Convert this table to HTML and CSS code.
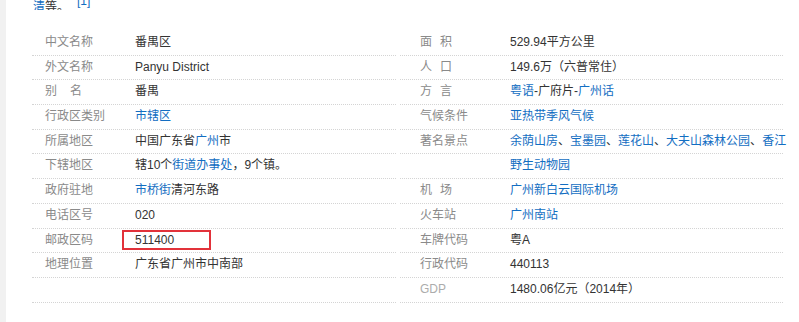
FILE: index.html
```html
<!DOCTYPE html>
<html lang="zh-CN">
<head>
<meta charset="utf-8">
<title>番禺区</title>
<link rel="stylesheet" href="styles.css">
</head>
<body>
<div class="page">
  <div class="intro"><p><a class="link">清</a>等。<sup class="ref"><a class="link">[1]</a></sup></p></div>
  <div class="info">
    <div class="col col-left">
      <div class="row"><span class="label">中文名称</span><span class="value">番禺区</span></div>
      <div class="row"><span class="label">外文名称</span><span class="value">Panyu District</span></div>
      <div class="row"><span class="label">别<i class="gap gap-wide"></i>名</span><span class="value">番禺</span></div>
      <div class="row"><span class="label">行政区类别</span><span class="value"><a class="link">市辖区</a></span></div>
      <div class="row"><span class="label">所属地区</span><span class="value">中国广东省<a class="link">广州</a>市</span></div>
      <div class="row"><span class="label">下辖地区</span><span class="value">辖10个<a class="link">街道办事处</a>，9个镇。</span></div>
      <div class="row"><span class="label">政府驻地</span><span class="value"><a class="link">市桥街</a>清河东路</span></div>
      <div class="row"><span class="label">电话区号</span><span class="value">020</span></div>
      <div class="row"><span class="label">邮政区码</span><span class="value value-marked">511400<span class="mark"></span></span></div>
      <div class="row"><span class="label">地理位置</span><span class="value">广东省广州市中南部</span></div>
      <div class="row"><span class="label"></span><span class="value"></span></div>
    </div>
    <div class="col col-right">
      <div class="row"><span class="label">面<i class="gap"></i>积</span><span class="value">529.94平方公里</span></div>
      <div class="row"><span class="label">人<i class="gap"></i>口</span><span class="value">149.6万（六普常住）</span></div>
      <div class="row"><span class="label">方<i class="gap"></i>言</span><span class="value"><a class="link">粤语</a>-广府片-<a class="link">广州话</a></span></div>
      <div class="row"><span class="label">气候条件</span><span class="value"><a class="link">亚热带季风气候</a></span></div>
      <div class="row"><span class="label">著名景点</span><span class="value"><a class="link">余荫山房</a>、<a class="link">宝墨园</a>、<a class="link">莲花山</a>、<a class="link">大夫山森林公园</a>、<a class="link">香江</a></span></div>
      <div class="row"><span class="label"></span><span class="value"><a class="link">野生动物园</a></span></div>
      <div class="row"><span class="label">机<i class="gap"></i>场</span><span class="value"><a class="link">广州新白云国际机场</a></span></div>
      <div class="row"><span class="label">火车站</span><span class="value"><a class="link">广州南站</a></span></div>
      <div class="row"><span class="label">车牌代码</span><span class="value">粤A</span></div>
      <div class="row"><span class="label">行政代码</span><span class="value">440113</span></div>
      <div class="row"><span class="label label-light">GDP</span><span class="value">1480.06亿元（2014年）</span></div>
    </div>
  </div>
</div>
</body>
</html>
```

FILE: styles.css
```css
* {
  box-sizing: border-box;
}

html, body {
  margin: 0;
  padding: 0;
  background: #ffffff;
}

body {
  font-family: "Liberation Sans", Arial, "Noto Sans CJK SC", sans-serif;
  font-size: 12px;
  color: #333333;
}

.page {
  min-height: 322px;
  border-left: 6px solid #f1f1f1;
  padding-left: 26px;
}

.intro {
  height: 10px;
  overflow: hidden;
  display: flex;
  align-items: flex-end;
  padding-left: 1px;
}

.intro p {
  margin: 0;
  line-height: 16px;
  margin-bottom: -5px;
  white-space: nowrap;
}

.ref {
  font-size: 12px;
  vertical-align: 6px;
  line-height: 0;
  margin-left: 8px;
}

.link {
  color: #136ec2;
  text-decoration: none;
}

.info {
  display: flex;
  margin-top: 21px;
}

.col-left {
  width: 364px;
}

.col-right {
  width: 383px;
  margin-left: 4px;
}

.row {
  display: flex;
  height: 24.7px;
  line-height: 23.7px;
  border-bottom: 1px dotted #d4d4d4;
  white-space: nowrap;
}

.label {
  flex: none;
  color: #8a8a8a;
}

.col-left .label {
  width: 103px;
  padding-left: 13px;
}

.col-right .label {
  width: 110px;
  padding-left: 20px;
}

.label-light {
  color: #acacac;
}

.gap {
  display: inline-block;
  width: 8px;
}

.gap-wide {
  width: 13px;
}

.value {
  flex: 1;
  color: #333333;
}

.value-marked {
  position: relative;
}

.mark {
  position: absolute;
  left: -13px;
  top: 1px;
  width: 89px;
  height: 20px;
  border: 2px solid #e2323a;
}
```
